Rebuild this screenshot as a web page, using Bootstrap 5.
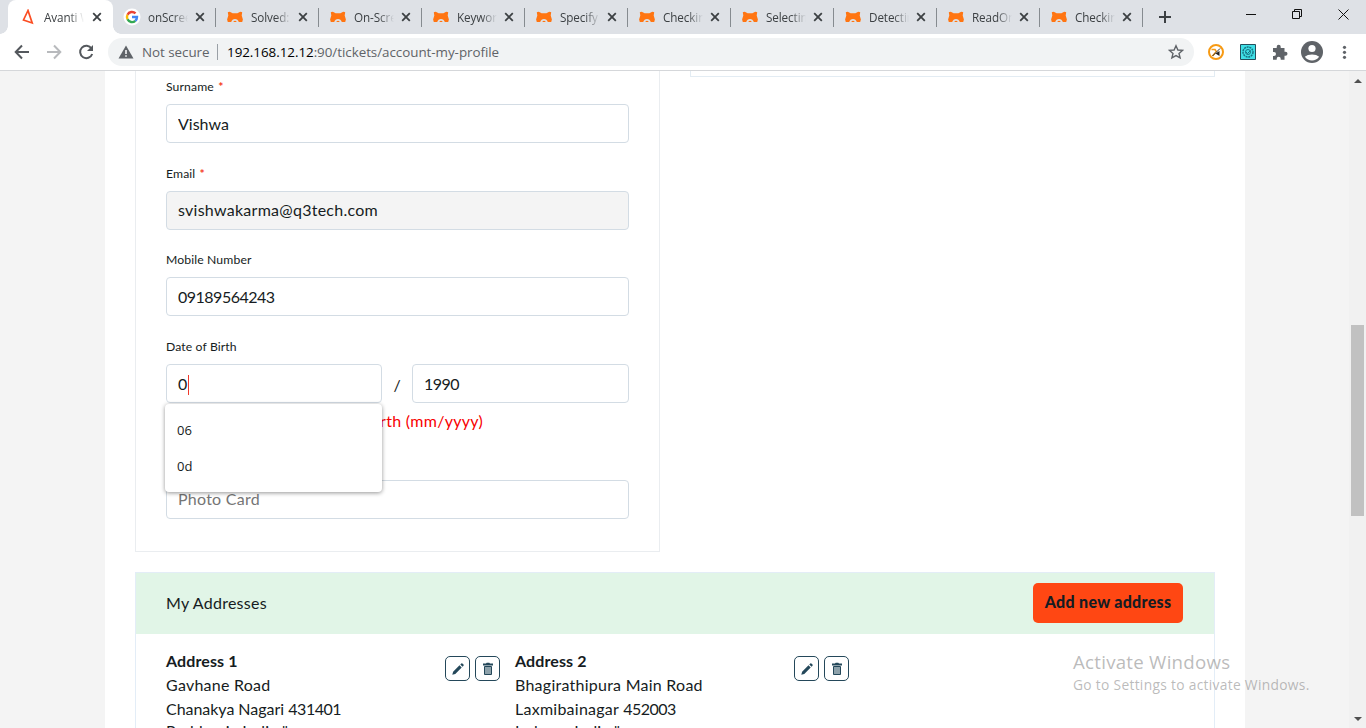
<!DOCTYPE html>
<html lang="en">
<head>
<meta charset="utf-8">
<meta name="viewport" content="width=device-width, initial-scale=1">
<title>Avanti - My Profile</title>
<link href="https://cdn.jsdelivr.net/npm/bootstrap@5.3.0/dist/css/bootstrap.min.css" rel="stylesheet">
<style>
  body{height:728px;overflow:hidden;background:#fff;color:#161c22;font-family:Lato,"Liberation Sans",sans-serif;font-size:16px;line-height:24px}
  svg{display:block;flex:none}
  .ui{font-family:"Open Sans","Noto Sans",sans-serif}
  .tabstrip{height:34px;background:#dee1e6;padding-left:8px}
  .tab{width:103px;height:34px;padding-left:11px;font-size:11.7px;line-height:34px;color:#3c4043;position:relative}
  .tab.divided::after{content:"";position:absolute;right:0;top:8px;width:1px;height:19px;background:#868b90}
  .tab.current{width:105px;padding-left:12px;background:#fff;border-radius:8px 8px 0 0}
  .tab.current + .tab{padding-left:10px}
  .tab.current::before,.tab.current::after{content:"";position:absolute;bottom:0;width:8px;height:8px}
  .tab.current::before{left:-8px;background:radial-gradient(circle at 0 0,transparent 7.5px,#fff 8px)}
  .tab.current::after{right:-8px;background:radial-gradient(circle at 100% 0,transparent 7.5px,#fff 8px)}
  .tab-title{width:40px;margin-left:8px;overflow:hidden;white-space:nowrap;letter-spacing:-.1px;-webkit-mask-image:linear-gradient(90deg,#000 62%,transparent);mask-image:linear-gradient(90deg,#000 62%,transparent)}
  .tab-close{margin-left:7px}
  .tab.current .tab-close{margin-left:8px}
  .tab.current + .tab .tab-title{margin-left:7px}
  .toolbar{height:37px;border-bottom:1px solid #d5d7da;padding:0 13px 1px 14px}
  .omnibox{height:28px;width:1086px;margin-left:14px;border-radius:14px;background:#f1f3f4;font-size:13.4px;letter-spacing:-.04px;color:#5f6368;padding:0 10px}
  .omni-sep{width:1px;height:16px;background:#9aa0a6;margin:0 9px 0 7.500px}
  .viewport{height:657px;background:#f4f4f4;overflow:hidden}
  .sheet{width:1140px;margin-left:105px;background:#fff;padding:0 30px}
  .profile{width:525px;height:481px;border:1px solid #eaedf0;border-top:0;padding:4px 30px 0}
  .side{width:525px;height:6px;border:1px solid #e3ecf3;border-top:0}
  .field-label{display:block;font-size:12.2px;line-height:23px;height:29px;letter-spacing:.12px}
  .req{color:#f5391e;margin-left:1px;font-weight:700}
  .form-control.entry{height:39px;border-color:#d3dce4;border-radius:4px;padding:0 11px 1px;font-size:16px;line-height:37px;color:#161c22;margin-bottom:18.7px}
  .form-control.entry[readonly]{background:#f4f4f4;letter-spacing:.26px}
  .form-control.entry.digits,.digits{letter-spacing:-.5px}
  .form-control.entry.photo{letter-spacing:.25px;padding-bottom:2px}
  .form-control.entry::placeholder{color:#757575}
  .suggest{position:absolute;z-index:5;left:-1px;top:40px;width:217px;height:88px;padding:8px 0;background:#fff;border-radius:4px;box-shadow:0 1px 4px rgba(0,0,0,.42);font-size:13px}
  .suggest div{height:36px;line-height:36px;padding-left:12px}
  .caret{display:inline-block;width:1px;height:20px;background:#f0392b;vertical-align:middle;margin:-3px 0 0 1px}
  .month{width:216px}
  .year{width:217px}
  .slash{width:30px;line-height:42px}
  .warn{color:#f80000;margin-top:3px;height:71px;letter-spacing:.3px}
  .addresses{width:1080px;height:160px;margin-top:20px;border:1px solid #e3edf7}
  .addresses-head{height:61px;background:#e1f5e7;padding:0 31px 2px 30px;letter-spacing:.25px}
  .btn.add{height:40px;width:150px;padding:0 0 1px;background:#ff4713;color:#161c22;border:0;border-radius:5px;font-weight:900;font-size:16px;letter-spacing:.3px}
  .addr-list{padding-left:30px}
  .addr{width:349px;padding:15px 15px 0 0;white-space:nowrap;letter-spacing:.25px}
  .addr b{letter-spacing:.1px}
  .addr .town{letter-spacing:-.04px}
  .addr .county{margin-top:-2px}
  .btn.tool{width:25px;height:25px;padding:0;border:1px solid #24485a;border-radius:5px;background:#fff;margin-top:7px}
  .tools{gap:5px}
  .scroller{width:17px;background:#f1f1f1;height:657px;padding:7px 0 6px}
  .thumb{width:13px;height:191px;background:#c1c1c1;margin-bottom:auto;margin-top:242px}
  .watermark{position:absolute;left:1073px;top:649px;color:rgba(120,120,120,.5);white-space:nowrap}
  .wm-title{font-size:18.7px;line-height:26px;letter-spacing:.25px}
  .wm-text{font-size:13.8px;line-height:20px;letter-spacing:.3px}
</style>
</head>
<body>
<svg width="0" height="0" class="position-absolute">
  <symbol id="x" viewBox="0 0 10 10"><path d="M1.200 1.200l7.600 7.600M8.800 1.200L1.200 8.800" stroke="#3c4043" stroke-width="1.800"/></symbol>
  <symbol id="bear" viewBox="0 0 16 12"><path fill="#ff7512" d="M.8 1.200Q2.500.2 4.200 1.400L5.600 2.200h4.800l1.400-.8Q13.500.2 15.200 1.200L14.700 4.500 15.900 8.500l-.7 2.500h-3.400Q10.800 8 8 8T4.200 11H.8L.1 8.500 1.300 4.500z"/><path fill="#ff7512" d="M6.200 10.900q1.800-2.400 3.600 0z"/></symbol>
  <symbol id="pencil" viewBox="0 0 14 14"><path fill="#24485a" d="M1.300 12.700l.8-3L8.500 3.300l2.200 2.200-6.400 6.400zM9.300 2.500l1-1q.6-.5 1.100 0l1.100 1.100q.5.600 0 1.100l-1 1z"/></symbol>
  <symbol id="bin" viewBox="0 0 14 14"><path fill="#24485a" d="M2 1.500h3l.7-.8h2.600l.7.800h3V3.500H2z"/><path fill="#8da1aa" stroke="#24485a" d="M3.500 4.500h7v8h-7z"/></symbol>
</svg>

<header class="ui">
  <div class="tabstrip d-flex">
    <div class="tab current d-flex align-items-center"><svg width="16" height="16" viewBox="0 0 16 16"><path d="M8 1.500L3.500 11l8.700 3z" fill="none" stroke="#fb4d22" stroke-width="1.700"/></svg><span class="tab-title">Avanti Web</span><svg class="tab-close" width="10" height="10"><use href="#x"/></svg></div>
    <div class="tab divided d-flex align-items-center"><svg width="18" height="18" viewBox="0 0 18 18"><circle cx="9" cy="9" r="8.500" fill="#fff"/><g fill="none" stroke-width="2.400"><path stroke="#ea4335" d="M4.500 6.700a5 5 0 0 1 8-1.300"/><path stroke="#fbbc05" d="M4.500 6.700a5 5 0 0 0 0 4.600"/><path stroke="#34a853" d="M4.500 11.300a5 5 0 0 0 7.800 1.500"/><path stroke="#4285f4" d="M9 9h5a5 5 0 0 1-1.700 3.800"/></g></svg><span class="tab-title">onScreenKeyboard</span><svg class="tab-close" width="10" height="10"><use href="#x"/></svg></div>
    <div class="tab divided d-flex align-items-center"><svg width="16" height="12"><use href="#bear"/></svg><span class="tab-title">Solved: key</span><svg class="tab-close" width="10" height="10"><use href="#x"/></svg></div>
    <div class="tab divided d-flex align-items-center"><svg width="16" height="12"><use href="#bear"/></svg><span class="tab-title">On-Screen</span><svg class="tab-close" width="10" height="10"><use href="#x"/></svg></div>
    <div class="tab divided d-flex align-items-center"><svg width="16" height="12"><use href="#bear"/></svg><span class="tab-title">Keyword</span><svg class="tab-close" width="10" height="10"><use href="#x"/></svg></div>
    <div class="tab divided d-flex align-items-center"><svg width="16" height="12"><use href="#bear"/></svg><span class="tab-title">Specify a</span><svg class="tab-close" width="10" height="10"><use href="#x"/></svg></div>
    <div class="tab divided d-flex align-items-center"><svg width="16" height="12"><use href="#bear"/></svg><span class="tab-title">Checking</span><svg class="tab-close" width="10" height="10"><use href="#x"/></svg></div>
    <div class="tab divided d-flex align-items-center"><svg width="16" height="12"><use href="#bear"/></svg><span class="tab-title">Selecting</span><svg class="tab-close" width="10" height="10"><use href="#x"/></svg></div>
    <div class="tab divided d-flex align-items-center"><svg width="16" height="12"><use href="#bear"/></svg><span class="tab-title">Detecting</span><svg class="tab-close" width="10" height="10"><use href="#x"/></svg></div>
    <div class="tab divided d-flex align-items-center"><svg width="16" height="12"><use href="#bear"/></svg><span class="tab-title">ReadOnly</span><svg class="tab-close" width="10" height="10"><use href="#x"/></svg></div>
    <div class="tab divided d-flex align-items-center"><svg width="16" height="12"><use href="#bear"/></svg><span class="tab-title">Checking</span><svg class="tab-close" width="10" height="10"><use href="#x"/></svg></div>
    <svg class="ms-3 mt-2" width="12" height="18" viewBox="0 0 12 18"><path d="M6 3v12M0 9h12" stroke="#3c4043" stroke-width="2"/></svg>
    <svg class="ms-auto" width="130" height="34" viewBox="0 0 130 34"><g fill="none" stroke="#111"><path d="M10 14.500h10M56.500 11.500h7v7h-7zM58.500 11.500v-2h7v7h-2M102.500 9.500l10 10M112.500 9.500l-10 10"/></g></svg>
  </div>
  <div class="toolbar d-flex align-items-center">
    <svg width="16" height="16" viewBox="0 0 16 16"><path d="M15 8H2M8 1.500L1.700 8 8 14.500" fill="none" stroke="#54585d" stroke-width="2"/></svg>
    <svg class="ms-3" width="16" height="16" viewBox="0 0 16 16"><path d="M1 8h13M8 1.500L14.300 8 8 14.500" fill="none" stroke="#b8babd" stroke-width="2"/></svg>
    <svg class="ms-3" width="16" height="16" viewBox="0 0 16 16"><path d="M13.500 4.500A6.200 6.200 0 1 0 14.200 10" fill="none" stroke="#54585d" stroke-width="2"/><path d="M15 1v6H9z" fill="#54585d"/></svg>
    <div class="omnibox d-flex align-items-center">
      <svg width="16" height="14" viewBox="0 0 16 14"><path d="M8 .5L15.500 13.500H.5z" fill="#5f6368"/><path d="M8 5v4M8 10.200v1.600" stroke="#fff" stroke-width="1.500"/></svg>
      <span class="ms-2">Not secure</span><span class="omni-sep"></span>
      <span><span class="text-black">192.168.12.12</span>:90/tickets/account-my-profile</span>
      <svg class="ms-auto" width="16" height="16" viewBox="0 0 16 16"><path d="M8 1.800l1.900 4.200 4.600.4L11 9.500l1.100 4.400L8 11.600l-4.100 2.300L5 9.500 1.500 6.400 6.100 6z" fill="none" stroke="#5f6368" stroke-width="1.400"/></svg>
    </div>
    <svg class="ms-auto" width="150" height="24" viewBox="1203 40 150 24">
      <circle cx="1216" cy="52" r="7" fill="#fff" stroke="#f79a13" stroke-width="2"/><path d="M1211.500 49.500h3.500l1.500 2.500M1212.500 56l3-3.500" stroke="#f79a13" stroke-width="1.600" fill="none"/><path d="M1212.500 56l7.500-7.500" stroke="#333" stroke-width="1"/><path d="M1215.500 53.500l4-2.500v5z" fill="#222"/>
      <path d="M1240.500 44.500h15v15h-15z" fill="#3fdfe6" stroke="#244f5c"/><circle cx="1248" cy="52" r="5" fill="none" stroke="#187483" stroke-width="1.500" stroke-dasharray="2 .7"/><circle cx="1248" cy="52" r="2.500" fill="none" stroke="#187483"/><path d="M1246 52l1.500 1.500 3-3" stroke="#187483" fill="none"/>
      <path d="M1273 48h3.700v-1.200a2 2 0 0 1 4 0V48h3.800v3.800h1a2 2 0 0 1 0 4h-1v4h-3.800v-1a2 2 0 0 0-4 0v1H1273v-3.700h1a2 2 0 0 0 0-4h-1z" fill="#5f6368"/>
      <circle cx="1312" cy="52" r="11" fill="#5f6368"/><circle cx="1312" cy="48.500" r="3.600" fill="#fff"/><path d="M1304.800 56.800a9 6 0 0 1 14.400 0 9 9 0 0 1-14.400 0z" fill="#fff"/>
      <g fill="#5f6368"><circle cx="1344.500" cy="47.300" r="1.600"/><circle cx="1344.500" cy="52.300" r="1.600"/><circle cx="1344.500" cy="57.300" r="1.600"/></g>
    </svg>
  </div>
</header>

<div class="viewport d-flex">
  <main class="sheet">
    <div class="d-flex justify-content-between">
      <section class="profile">
        <label class="field-label">Surname <span class="req">*</span></label>
        <input class="form-control entry" value="Vishwa">
        <label class="field-label">Email <span class="req">*</span></label>
        <input class="form-control entry" readonly value="svishwakarma@q3tech.com">
        <label class="field-label">Mobile Number</label>
        <input class="form-control entry digits" value="09189564243">
        <label class="field-label">Date of Birth</label>
        <div class="d-flex">
          <div class="position-relative month">
            <div class="form-control entry mb-0">0<span class="caret"></span></div>
            <div class="suggest ui"><div>06</div><div>0d</div></div>
          </div>
          <span class="slash text-center">/</span>
          <div class="year"><input class="form-control entry digits mb-0" value="1990"></div>
        </div>
        <div class="warn">Please enter a valid date of birth (mm/yyyy)</div>
        <input class="form-control entry photo" placeholder="Photo Card">
      </section>
      <aside class="side"></aside>
    </div>
    <section class="addresses">
      <div class="addresses-head d-flex align-items-center justify-content-between"><span>My Addresses</span><button class="btn add">Add new address</button></div>
      <div class="d-flex addr-list">
        <div class="addr d-flex justify-content-between"><div><b>Address 1</b><br>Gavhane Road<br><span class="town">Chanakya Nagari</span> <span class="digits">431401</span><div class="county">Parbhani , India "</div></div><div class="d-flex tools"><button class="btn tool"><svg class="mx-auto" width="14" height="14"><use href="#pencil"/></svg></button><button class="btn tool"><svg class="mx-auto" width="14" height="14"><use href="#bin"/></svg></button></div></div>
        <div class="addr d-flex justify-content-between"><div><b>Address 2</b><br>Bhagirathipura Main Road<br>Laxmibainagar <span class="digits">452003</span><div class="county">Indore , India "</div></div><div class="d-flex tools"><button class="btn tool"><svg class="mx-auto" width="14" height="14"><use href="#pencil"/></svg></button><button class="btn tool"><svg class="mx-auto" width="14" height="14"><use href="#bin"/></svg></button></div></div>
      </div>
    </section>
  </main>
  <div class="scroller d-flex flex-column align-items-center ms-auto">
    <svg width="8" height="5"><path d="M0 5l4-4 4 4z" fill="#505050"/></svg>
    <div class="thumb"></div>
    <svg width="8" height="5"><path d="M0 0l4 4 4-4z" fill="#505050"/></svg>
  </div>
</div>
<div class="watermark ui"><div class="wm-title">Activate Windows</div><div class="wm-text">Go to Settings to activate Windows.</div></div>
<script src="https://cdn.jsdelivr.net/npm/bootstrap@5.3.0/dist/js/bootstrap.bundle.min.js"></script>
</body>
</html>
